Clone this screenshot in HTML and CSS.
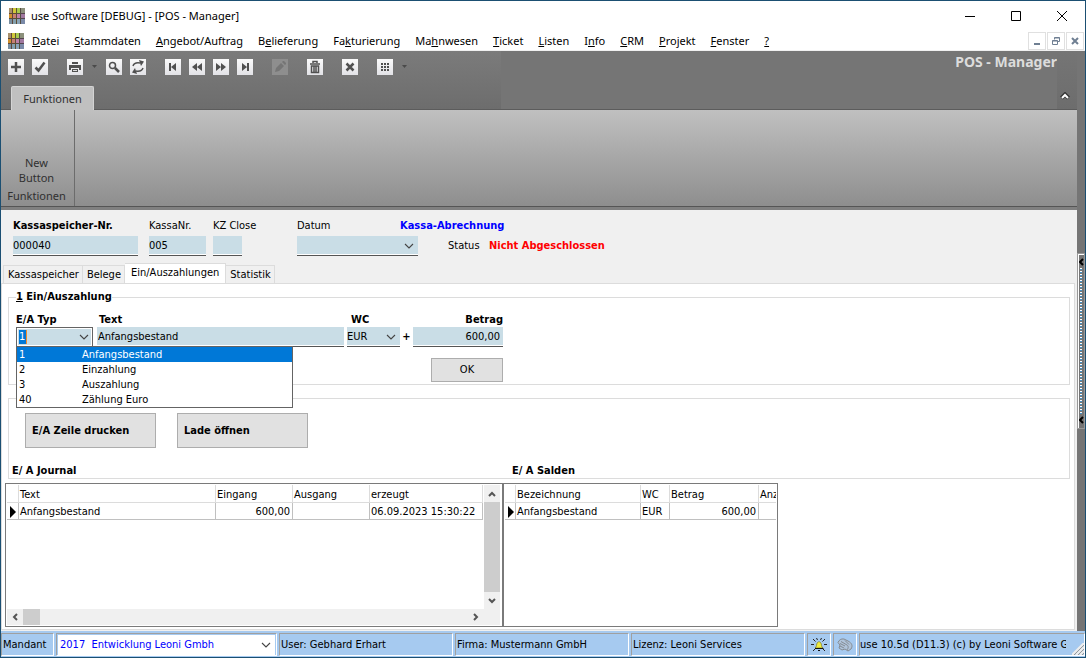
FILE: index.html
```html
<!DOCTYPE html>
<html lang="de">
<head>
<meta charset="utf-8">
<meta name="viewport" content="width=device-width, initial-scale=1">
<title>use Software [DEBUG] - [POS - Manager]</title>
<link rel="stylesheet" href="styles.css">
</head>
<body>
<svg class="defs" aria-hidden="true">
  <symbol id="logo" viewBox="0 0 16 16">
    <path fill="#b08a58" d="M0 0h4v16H0z"/><path fill="#a8a444" d="M4 0h4v16H4z"/><path fill="#8aa070" d="M8 0h4v16H8z"/><path fill="#8d8295" d="M12 0h4v16h-4z"/>
    <path fill="#a8906c" d="M0 0h3v5H0z"/><path fill="#d0c83a" d="M4 0h3v5H4z"/><path fill="#a8cc50" d="M8 0h3v5H8z"/><path fill="#8c907c" d="M12 0h4v5h-4z"/>
    <path fill="#d0902c" d="M0 6h3v4H0z"/><path fill="#c88072" d="M4 6h3v4H4z"/><path fill="#c080a8" d="M8 6h3v4H8z"/><path fill="#a078a0" d="M12 6h4v4h-4z"/>
    <path fill="#788ea0" d="M0 11h3v5H0z"/><path fill="#84a0ae" d="M4 11h3v5H4z"/><path fill="#8aa4b8" d="M8 11h3v5H8z"/><path fill="#7a8aa8" d="M12 11h4v5h-4z"/>
    <path stroke="#3c2c30" d="M0 5.5h16M0 10.5h16M3.5 0v16M7.5 0v16M11.500 0v16" opacity=".7"/>
  </symbol>
  <symbol id="chevron" viewBox="0 0 10 6"><path d="M1 1l4 4 4-4" fill="none" stroke="#444" stroke-width="1.1"/></symbol>
  <symbol id="bold-chevron" viewBox="0 0 8 6"><path d="M1 5l3-3 3 3" fill="none" stroke="#555" stroke-width="2"/></symbol>
</svg>
<div class="window">
  <header class="titlebar">
    <svg class="logo"><use href="#logo"/></svg>
    <span class="title">use Software [DEBUG] - [POS - Manager]</span>
    <div class="window-buttons">
      <button aria-label="Minimieren"><svg viewBox="0 0 12 12"><path d="M1 6.500h10" stroke="#000"/></svg></button>
      <button aria-label="Maximieren"><svg viewBox="0 0 12 12"><path d="M1.500 1.500h9v9h-9z" fill="none" stroke="#000"/></svg></button>
      <button aria-label="Schließen"><svg viewBox="0 0 12 12"><path d="M1 1l10 10M11 1L1 11" stroke="#000"/></svg></button>
    </div>
  </header>
  <nav class="menubar">
    <svg class="logo"><use href="#logo"/></svg>
    <a href="#"><u>D</u>atei</a><a href="#"><u>S</u>tammdaten</a><a href="#"><u>A</u>ngebot/Auftrag</a><a href="#">B<u>e</u>lieferung</a><a href="#">Fa<u>k</u>turierung</a><a href="#">Ma<u>h</u>nwesen</a><a href="#"><u>T</u>icket</a><a href="#"><u>L</u>isten</a><a href="#">I<u>n</u>fo</a><a href="#"><u>C</u>RM</a><a href="#"><u>P</u>rojekt</a><a href="#"><u>F</u>enster</a><a href="#"><u>?</u></a>
    <div class="mdi-buttons">
      <button aria-label="Fenster minimieren"><svg viewBox="0 0 8 8"><path d="M1 7h6" stroke="#6f7f92" stroke-width="2"/></svg></button>
      <button aria-label="Fenster wiederherstellen"><svg viewBox="0 0 8 8"><path d="M2.500 2.500V.5h5v4h-2M.5 3.500h5v4h-5zM2.500 1h5M.5 4h5" fill="none" stroke="#6f7f92"/></svg></button>
      <button aria-label="Fenster schließen"><svg viewBox="0 0 8 8"><path d="M1 1l6 6M7 1L1 7" stroke="#6f7f92" stroke-width="2"/></svg></button>
    </div>
  </nav>
  <div class="workspace">
    <main class="main">
      <div class="ribbon-head">
        <div class="ribbon-left">
          <div class="toolbar">
            <div class="tools">
              <button aria-label="Neu"><svg viewBox="0 0 16 16"><path d="M8 3v10M3 8h10"/></svg></button>
              <button aria-label="Speichern"><svg viewBox="0 0 16 16"><path d="M3.500 8.500l3 3 6-8"/></svg></button>
            </div>
            <div class="tools">
              <button aria-label="Drucken"><svg viewBox="0 0 16 16"><path class="f" d="M5 3h6v2H5zM2 6h12v5h-2V9H4v2H2zM5 10h6v3H5z"/><path class="hair" d="M6 11.500h4"/></svg></button>
              <button class="more" aria-label="Druckoptionen"><svg viewBox="0 0 7 4"><path d="M1 0h5L3.500 3z"/></svg></button>
              <button aria-label="Suchen"><svg viewBox="0 0 16 16"><circle class="thin" cx="6.500" cy="6.500" r="3"/><path d="M9 9l4 4"/></svg></button>
              <button aria-label="Aktualisieren"><svg viewBox="0 0 16 16"><path class="thin" d="M3 7c1-3 4-3.500 7-3M13 9c-1 3-4 3.500-7 3"/><path class="f" d="M9 1l5 1.500L11 7zM7 15l-5-1.500L5 9z"/></svg></button>
            </div>
            <div class="tools">
              <button aria-label="Erster"><svg viewBox="0 0 16 16"><path class="f" d="M4 4h2v8H4zM11 4v8L6 8z"/></svg></button>
              <button aria-label="Zurück"><svg viewBox="0 0 16 16"><path class="f" d="M8 4v8L3 8zM13 4v8L8 8z"/></svg></button>
              <button aria-label="Weiter"><svg viewBox="0 0 16 16"><path class="f" d="M3 4v8l5-4zM8 4v8l5-4z"/></svg></button>
              <button aria-label="Letzter"><svg viewBox="0 0 16 16"><path class="f" d="M10 4h2v8h-2zM5 4v8l5-4z"/></svg></button>
            </div>
            <div class="tools"><button class="off" aria-label="Bearbeiten" disabled><svg viewBox="0 0 16 16"><path class="f" d="M3 13l1-4 5-5 3 3-5 5zM10 3l1-1h1l2 2v1l-1 1z"/></svg></button></div>
            <div class="tools"><button aria-label="Löschen"><svg viewBox="0 0 16 16"><path class="thin" d="M3 5h10M6 4V2.500h4V4M4.500 7v6.500h7V7zM7 7v6M9 7v6"/></svg></button></div>
            <div class="tools"><button aria-label="Abbrechen"><svg viewBox="0 0 16 16"><path d="M4.500 4.500l7 7M11.500 4.500l-7 7"/></svg></button></div>
            <div class="tools">
              <button aria-label="Ansicht"><svg viewBox="0 0 16 16"><path class="f" d="M4 4h2v2H4zM7 4h2v2H7zM10 4h2v2h-2zM4 7h2v2H4zM7 7h2v2H7zM10 7h2v2h-2zM4 10h2v2H4zM7 10h2v2H7zM10 10h2v2h-2z"/></svg></button>
              <button class="more" aria-label="Ansichtsoptionen"><svg viewBox="0 0 7 4"><path d="M1 0h5L3.500 3z"/></svg></button>
            </div>
          </div>
          <button class="ribbon-tab">Funktionen</button>
        </div>
        <h1>POS - Manager</h1>
        <button class="collapse" aria-label="Menüband einklappen"><svg viewBox="0 0 10 8"><path d="M1.500 6L5 2.500 8.500 6" fill="none" stroke="#333" stroke-width="4"/><path d="M2 6l3-3 3 3" fill="none" stroke="#fff" stroke-width="2"/></svg></button>
      </div>
      <div class="ribbon-body">
        <section class="ribbon-group">
          <button>New<br>Button</button>
          <span>Funktionen</span>
        </section>
      </div>

      <form class="record">
        <label class="strong c1" for="ks">Kassaspeicher-Nr.</label>
        <label class="c2" for="kn">KassaNr.</label>
        <label class="c3" for="kz">KZ Close</label>
        <label class="c4" for="dat">Datum</label>
        <strong class="c5 kassa">Kassa-Abrechnung</strong>
        <input class="field c1 w-ks" id="ks" value="000040">
        <input class="field c2 w-kn" id="kn" value="005">
        <input class="field c3 w-kz" id="kz" value="">
        <div class="combo c4 w-dat"><select class="field" id="dat"><option></option></select><svg><use href="#chevron"/></svg></div>
        <span class="c6">Status</span>
        <strong class="c7 closed">Nicht Abgeschlossen</strong>
      </form>

      <div class="tabs" role="tablist">
        <button role="tab">Kassaspeicher</button><button role="tab">Belege</button><button role="tab" class="active" aria-selected="true">Ein/Auszahlungen</button><button role="tab">Statistik</button>
      </div>

      <section class="page">
        <fieldset class="box entry">
          <legend><u>1</u> Ein/Auszahlung</legend>
          <div class="entry-grid">
            <label for="typ">E/A Typ</label>
            <label class="in-text" for="txt">Text</label>
            <label class="in-wc" for="wc">WC</label>
            <span></span>
            <label class="num" for="bet">Betrag</label>
            <div class="typ">
              <input id="typ" value="1" role="combobox" aria-expanded="true" aria-controls="typ-list">
              <svg><use href="#chevron"/></svg>
              <ul id="typ-list" role="listbox">
                <li role="option" aria-selected="true" class="selected"><span>1</span><span>Anfangsbestand</span></li>
                <li role="option"><span>2</span><span>Einzahlung</span></li>
                <li role="option"><span>3</span><span>Auszahlung</span></li>
                <li role="option"><span>40</span><span>Zählung Euro</span></li>
              </ul>
            </div>
            <input class="field w-txt" id="txt" value="Anfangsbestand">
            <div class="combo"><select class="field" id="wc"><option>EUR</option></select><svg><use href="#chevron"/></svg></div>
            <strong class="plus">+</strong>
            <input class="field num" id="bet" value="600,00">
            <button class="push ok" type="button">OK</button>
          </div>
        </fieldset>
        <section class="box actions">
          <div class="action-row">
            <button class="push" type="button">E/A Zeile drucken</button>
            <button class="push" type="button">Lade öffnen</button>
          </div>
          <div class="captions"><h2>E/ A Journal</h2><h2>E/ A Salden</h2></div>
        </section>
        <div class="grids">
          <div class="grid journal">
            <div class="cells">
              <table>
                <colgroup><col class="k-mark"><col class="k-text"><col class="k-sum"><col class="k-sum"><col class="k-date"></colgroup>
                <thead><tr><th></th><th>Text</th><th>Eingang</th><th>Ausgang</th><th>erzeugt</th></tr></thead>
                <tbody><tr><td class="mark"><svg viewBox="0 0 6 12"><path d="M0 0l6 6-6 6z"/></svg></td><td>Anfangsbestand</td><td class="num">600,00</td><td></td><td>06.09.2023 15:30:22</td></tr></tbody>
              </table>
            </div>
            <div class="vscroll">
              <button type="button" aria-label="Nach oben"><svg class="arrow"><use href="#bold-chevron"/></svg></button>
              <div class="thumb"></div>
              <button type="button" aria-label="Nach unten"><svg class="arrow down"><use href="#bold-chevron"/></svg></button>
            </div>
            <div class="hscroll">
              <button type="button" aria-label="Nach links"><svg class="arrow left"><use href="#bold-chevron"/></svg></button>
              <div class="thumb"></div>
              <button type="button" aria-label="Nach rechts"><svg class="arrow right"><use href="#bold-chevron"/></svg></button>
            </div>
          </div>
          <div class="grid salden">
            <div class="cells">
              <table>
                <colgroup><col class="k-mark"><col class="k-name"><col class="k-wc"><col class="k-amount"><col class="k-count"></colgroup>
                <thead><tr><th></th><th>Bezeichnung</th><th>WC</th><th>Betrag</th><th>Anzahl</th></tr></thead>
                <tbody><tr><td class="mark"><svg viewBox="0 0 6 12"><path d="M0 0l6 6-6 6z"/></svg></td><td>Anfangsbestand</td><td>EUR</td><td class="num">600,00</td><td></td></tr></tbody>
              </table>
            </div>
          </div>
        </div>
      </section>
    </main>
    <aside class="rail">
      <button class="splitter" aria-label="Seitenleiste öffnen">
        <svg viewBox="0 0 5 8"><path d="M4 1L1 4l3 3" fill="none" stroke="#000" stroke-width="2"/></svg>
        <span class="dots"></span>
        <svg viewBox="0 0 5 8"><path d="M4 1L1 4l3 3" fill="none" stroke="#000" stroke-width="2"/></svg>
      </button>
    </aside>
  </div>
  <footer class="status">
    <label class="cell s-mandant" for="mandant">Mandant</label>
    <div class="cell s-select"><div class="combo"><select id="mandant"><option>2017&nbsp; Entwicklung Leoni Gmbh</option></select><svg><use href="#chevron"/></svg></div></div>
    <div class="cell s-info">User: Gebhard Erhart</div>
    <div class="cell s-info">Firma: Mustermann GmbH</div>
    <div class="cell s-info">Lizenz: Leoni Services</div>
    <div class="cell s-icon"><svg viewBox="0 0 16 16"><path d="M2 2l2.500 2.500M14 2l-2.500 2.500M0 7.500h3M13 7.500h3M2 14l2-2M14 14l-2-2M5.500 1l1 2M10.500 1l-1 2" stroke="#222"/><path d="M4 11c2-1 1-4 2.500-5.500 1-1 2-1 3 0C11 7 10 10 12 11z" fill="#f0ec3c" stroke="#77752c" stroke-width=".7"/><path d="M4 11.500h8.500M7 13.500h2" stroke="#111"/></svg></div>
    <div class="cell s-icon"><svg viewBox="0 0 16 16"><path d="M1 5.500C2 3 4 1.500 7 2l4 2c4 2 5 5 3 8l-3 2-3-2-3 1-3-2 1-3z" fill="#b0c4da" stroke="#858b92"/><path d="M3 6.500l5 2.500M4 4.500L10 8c2 1 1 4 0 5M3 9l4 2M8 3.500l4 4" fill="none" stroke="#858b92"/></svg></div>
    <div class="cell s-version"><span>use 10.5d (D11.3) (c) by Leoni Software GmbH</span><svg class="grip" viewBox="0 0 12 12"><path d="M0 12L12 0M4 12l8-8M8 12l4-4" stroke="#eee" stroke-width="2"/><path d="M2 12L12 2M6 12l6-6M10 12l2-2" stroke="#999"/></svg></div>
  </footer>
</div>
</body>
</html>
```

FILE: styles.css
```css
* { box-sizing: border-box; }
body { margin: 0; }
.window {
  min-height: 100vh;
  display: flex;
  flex-direction: column;
  border: 1px solid #1b4f72;
  background: #f0f0f0;
  color: #000;
  font: 11px/14px "DejaVu Sans Condensed", "Noto Sans", sans-serif;
}
button, input, select { font: inherit; color: inherit; margin: 0; padding: 0; border: 0; border-radius: 0; background: none; }
a { color: inherit; text-decoration: none; }
svg { display: block; }
.defs { display: none; }
.logo { width: 16px; height: 16px; }

/* Title and menu */
.titlebar, .menubar { display: flex; align-items: center; background: #fff; font: 11px/16px "Noto Sans", sans-serif; }
.titlebar { height: 29px; padding-left: 8px; gap: 6px; }
.window-buttons { margin-left: auto; display: flex; }
.window-buttons button { width: 46px; height: 29px; display: grid; place-items: center; }
.window-buttons svg { width: 12px; height: 12px; }
.menubar { height: 21px; padding: 1px 0 0 7px; border-bottom: 1px solid #f0f0f0; }
.menubar a { padding: 0 7px 0 8px; }
.menubar .logo { flex: none; }
.mdi-buttons { margin-left: auto; display: flex; gap: 1px; padding-right: 1px; }
.mdi-buttons button { width: 18px; height: 18px; border: 1px solid #e0e0e0; display: grid; place-items: center; }
.mdi-buttons svg { width: 8px; height: 8px; }

/* Ribbon */
.workspace { flex: 1; display: flex; }
.main { flex: 1; min-width: 0; display: flex; flex-direction: column; }
.ribbon-head { display: flex; height: 59px; background: #757575; border-bottom: 1px solid #5c5c5c; }
.ribbon-left { width: 500px; display: flex; flex-direction: column; justify-content: space-between; background: linear-gradient(#7b7b7b, #6d6d6d); }
.toolbar { display: flex; gap: 19px; padding: 8px 7px 0; }
.tools { display: flex; gap: 8px; }
.tools button { width: 16px; height: 16px; background: linear-gradient(#fafafa, #e2e2e6); }
.tools svg { width: 16px; height: 16px; fill: none; stroke: #505050; stroke-width: 2.500; }
.tools .f { fill: #505050; stroke: none; }
.tools .thin { stroke-width: 1.500; }
.tools .hair { stroke: #ddd; stroke-width: 1; }
.tools .off { background: #8e8e8e; }
.tools .off .f { fill: #757575; }
.tools .more { width: 7px; background: none; display: grid; place-items: center; }
.tools .more svg { width: 7px; height: 4px; fill: #4a4a4a; stroke: none; }
.ribbon-tab { align-self: flex-start; margin: 0 0 -1px 10px; width: 83px; height: 24px; background: #c0c0c0; border: 1px solid #d4d4d4; border-bottom: 0; border-radius: 2px 2px 0 0; }
.ribbon-tab, .ribbon-group { font: 11px/15px "Noto Sans", sans-serif; color: #303030; }
.ribbon-head h1 { margin: 0 0 0 auto; font: bold 14px/22px "Noto Sans", sans-serif; color: #dcdcdc; }
.collapse { width: 20px; display: grid; place-items: end center; padding: 0 4px 9px 0; background: linear-gradient(#757575, #6d6d6d); }
.collapse svg { width: 10px; height: 8px; }
.ribbon-body { height: 100px; display: flex; background: linear-gradient(#c0c0c0, #8e8e8e 96px); border-bottom: 3px solid #808080; box-shadow: inset 0 -1px #555; }
.ribbon-group { width: 74px; padding: 45px 2px 0 0; display: flex; flex-direction: column; align-items: center; border-right: 1px solid #6c6c6c; margin-bottom: 1px; }
.ribbon-group span { margin-top: 3px; }

/* Record header */
.record { display: grid; grid-template-columns: 136px 64px 84px 103px 48px 41px auto; grid-template-rows: 18px 20px; row-gap: 1px; justify-content: start; align-items: center; padding: 7px 12px 0; }
.strong, .closed, .kassa { font-weight: bold; }
.c1 { grid-column: 1; } .c2 { grid-column: 2; } .c3 { grid-column: 3; } .c6 { grid-column: 6; } .c7 { grid-column: 7; }
.c4 { grid-column: 4; }
.c5 { grid-column: 5 / -1; }
.combo.c4 { grid-column: 4 / span 2; }
.kassa { color: #00f; }
.closed { color: #f00; }
.w-ks { width: 125px; } .w-kn { width: 57px; } .w-kz { width: 29px; } .w-dat { width: 121px; } .w-txt { width: 247px; }
.field { display: block; height: 20px; background: #c9dde6; border-bottom: 1px solid #555; box-shadow: inset 0 -1px #fff; }
input.w-txt { padding-left: 1px; }
select { appearance: none; width: 100%; }
.combo { display: grid; grid-template-columns: 1fr 18px; align-items: center; }
.combo select { grid-area: 1 / 1 / 2 / 3; }
.combo svg { grid-area: 1 / 2; justify-self: center; width: 10px; height: 6px; pointer-events: none; }

/* Tabs */
.tabs { display: flex; align-items: flex-end; margin-top: 7px; padding-left: 2px; }
.tabs button { height: 18px; padding: 1px 3px 0 4px; border: 1px solid #dcdcdc; border-width: 1px 1px 0 0; }
.tabs button:first-child { border-left-width: 1px; }
.tabs .active { height: 21px; margin-bottom: -1px; padding: 0 6px 3px; background: #fff; border-left: 0; }
.page { flex: 1; display: flex; flex-direction: column; margin: 0 2px 1px 0; background: #fff; border: 1px solid #dcdcdc; padding: 6px 4px 2px 3px; }
.box { margin: 0 0 0 3px; border: 1px solid #dcdcdc; padding: 0; min-width: 0; }
.entry { padding: 0 7px 2px; }
.entry legend { padding: 0; font-weight: bold; }
.entry-grid { display: grid; grid-template-columns: 81px 250px 53px 13px 90px; grid-template-rows: 14px 20px 35px; padding-top: 9px; justify-content: start; align-items: center; }
.entry-grid label { font-weight: bold; }
.in-text { padding-left: 2px; }
.in-wc { padding-left: 4px; }
.num { text-align: right; }
.entry-grid input.num { width: 90px; padding-right: 3px; }
.plus { text-align: center; }
.typ { position: relative; width: 77px; height: 20px; display: flex; align-items: center; justify-content: space-between; padding: 1px 3px 1px 2px; background: #c9dde6; border: 1px solid #646464; box-shadow: inset 0 0 0 1px #fff; }
.typ input { width: 8px; height: 14px; background: #0078d7; color: #fff; border-right: 1px solid #f28a2a; }
.typ svg { width: 10px; height: 6px; }
.typ ul { position: absolute; z-index: 2; top: 18px; left: -1px; width: 277px; margin: 0; padding: 0; list-style: none; background: #fff; border: 1px solid #646464; }
.typ li { display: grid; grid-template-columns: 63px 1fr; height: 15px; line-height: 15px; padding-left: 2px; }
.typ .selected { background: #0078d7; color: #fff; }
.push { background: #e1e1e1; border: 1px solid #adadad; }
.ok { grid-column: 4 / 6; justify-self: end; align-self: end; width: 72px; height: 24px; }
.actions { margin-top: 13px; padding: 14px 3px 0; }
.action-row { display: flex; gap: 21px; padding-left: 13px; }
.action-row .push { width: 131px; height: 35px; padding-left: 6px; text-align: left; font-weight: bold; }
.captions { display: grid; grid-template-columns: 500px 1fr; margin-top: 16px; }
.captions h2 { margin: 0; font: inherit; font-weight: bold; }

/* Data grids */
.grids { flex: 1; display: flex; margin-top: 4px; }
.grid { border: 1px solid #7a7a7a; padding: 1px; background: #fff; display: grid; }
.journal { width: 498px; grid-template-columns: 1fr 16px; grid-template-rows: 1fr 16px; padding-right: 2px; }
.salden { width: 275px; grid-template-columns: minmax(0, 1fr); }
.cells { overflow: hidden; }
table { table-layout: fixed; border-collapse: separate; border-spacing: 0; width: 0; }
.k-mark { width: 12px; } .k-text { width: 197px; } .k-sum { width: 77px; } .k-date { width: 113px; }
.salden .k-mark { width: 11px; }
.k-name { width: 125px; } .k-wc { width: 29px; } .k-amount { width: 89px; } .k-count { width: 40px; }
th, td { height: 17px; padding: 1px 2px 0 1px; border: 0 solid #c0c0c0; border-width: 0 1px 1px 0; text-align: left; font-weight: normal; white-space: nowrap; overflow: hidden; line-height: 15px; }
th { height: 18px; border-color: #dcdcdc; }
td.num { text-align: right; }
td.mark { padding-left: 3px; }
.mark svg { width: 6px; height: 12px; }
.vscroll { display: flex; flex-direction: column; background: #f0f0f0; }
.vscroll .thumb { flex: 1; background: #cdcdcd; }
.hscroll { grid-column: 1 / -1; display: flex; background: #f0f0f0; padding-right: 16px; }
.hscroll .thumb { width: 17px; background: #cdcdcd; margin-right: auto; }
.vscroll button, .hscroll button { width: 16px; height: 17px; display: grid; place-items: center; }
.hscroll button { height: 16px; }
.arrow { width: 8px; height: 6px; }
.down { rotate: 180deg; } .left { rotate: 270deg; } .right { rotate: 90deg; }

/* Right rail */
.rail { width: 8px; background: #757575; display: flex; flex-direction: column; justify-content: center; }
.splitter { height: 176px; padding: 4px 0; display: flex; flex-direction: column; align-items: center; border: 1px solid #999; background: #757575; box-shadow: inset 1px 1px #fff; }
.splitter svg { width: 5px; height: 8px; }
.dots { flex: 1; width: 2px; margin: 2px 0; background: repeating-linear-gradient(#fff 0 1px, #4a90c0 1px 2px, #757575 2px 3px); }

/* Status bar */
.status { display: flex; gap: 2px; height: 26px; padding: 2px 0 1px; background: #a6caf0; }
.cell { border: 1px solid; border-color: #a0a0a0 #fff #fff #a0a0a0; display: flex; align-items: center; padding: 1px 1px 0; white-space: nowrap; overflow: hidden; min-width: 0; }
.s-mandant { flex: none; width: 53px; }
.s-select { flex: 0 1 221px; padding-top: 0; }
.s-select .combo { flex: 1; height: 20px; background: #fff; color: #00f; }
.s-select select { padding-left: 2px; }
.s-info { flex: 0 1 174px; }
.s-icon { flex: none; width: 24px; justify-content: center; }
.s-icon svg { width: 16px; height: 16px; flex: none; }
.s-version { flex: 1; padding: 1px 0 0; }
.s-version span { flex: 1; overflow: hidden; margin-right: 6px; }
.grip { flex: none; width: 12px; height: 12px; align-self: flex-end; }
```
